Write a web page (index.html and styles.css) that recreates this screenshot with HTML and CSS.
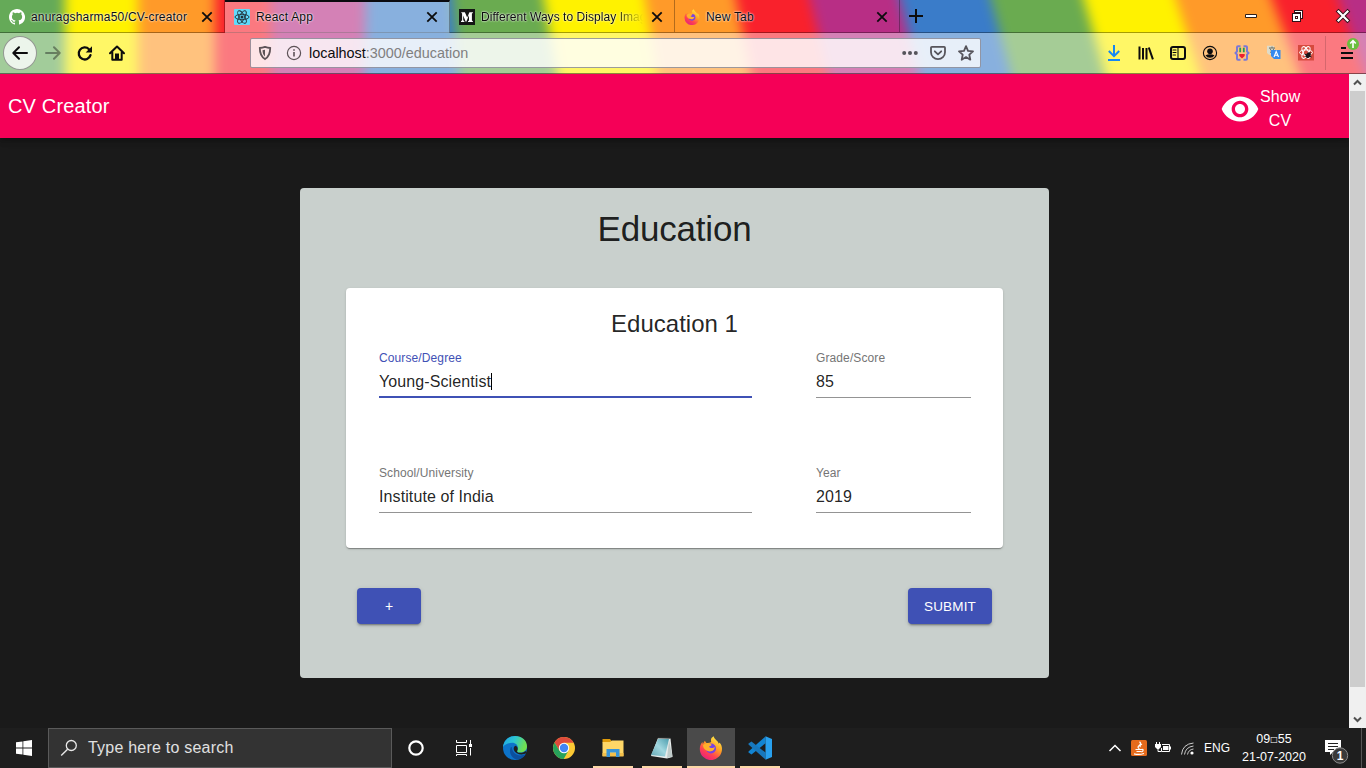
FILE: index.html
```html
<!DOCTYPE html>
<html lang="en">
<head>
<meta charset="utf-8">
<title>React App</title>
<link rel="stylesheet" href="styles.css">
</head>
<body>
<div class="screen">
  <header class="browser">
    <svg class="theme" width="1366" height="74" viewBox="0 0 1366 74" preserveAspectRatio="none">
      <defs><filter id="soft" filterUnits="userSpaceOnUse" x="-60" y="-80" width="1500" height="234" color-interpolation-filters="sRGB"><feGaussianBlur stdDeviation="6"/></filter></defs>
      <rect width="1366" height="74" fill="#6aab50"/>
      <g filter="url(#soft)">
        <path fill="#65aa58" d="M-60-74H70V148H-60z"/>
        <path fill="#fff200" d="M65-74H140V148H65z"/>
        <path fill="#ff9a29" d="M138-74H218V148H138z"/>
        <path fill="#f9212c" d="M215-74H272V148H215z"/>
        <path fill="#b82e85" d="M271-74H372V148H271z"/>
        <path fill="#3a7cc9" d="M367-74H446L466 148H363z"/>
        <path fill="#6aab50" d="M446-74H532L571 148H466z"/>
        <path fill="#fff200" d="M531-74H634L670 148H570z"/>
        <path fill="#ff9a29" d="M633-74H723L768 148H669z"/>
        <path fill="#f9212c" d="M721-74H794L848 148H766z"/>
        <path fill="#b82e85" d="M792-74H884L941 148H846z"/>
        <path fill="#3a7cc9" d="M881-74H976L1033 148H938z"/>
        <path fill="#6aab50" d="M971-74H1067L1127 148H1031z"/>
        <path fill="#fff200" d="M1063-74H1153L1228 148H1126z"/>
        <path fill="#ff9a29" d="M1152-74H1248L1329 148H1224z"/>
        <path fill="#f9212c" d="M1244-74H1316L1394 148H1328z"/>
        <path fill="#b82e85" d="M1313-74H1430V148H1391z"/>
      </g>
    </svg>
    <div class="tabs">
      <div class="tab">
        <svg class="fav" viewBox="0 0 16 16"><path fill="#fff" d="M8 0C3.58 0 0 3.58 0 8c0 3.54 2.29 6.53 5.47 7.59.4.07.55-.17.55-.38v-1.49c-2.01.37-2.53-.49-2.69-.94-.09-.23-.48-.94-.82-1.13-.28-.15-.68-.52-.01-.53.63-.01 1.08.58 1.23.82.72 1.21 1.87.87 2.33.66.07-.52.28-.87.51-1.07-1.78-.2-3.64-.89-3.64-3.95 0-.87.31-1.59.82-2.15-.08-.2-.36-1.02.08-2.12 0 0 .67-.21 2.2.82a7.4 7.4 0 0 1 4 0c1.53-1.04 2.2-.82 2.2-.82.44 1.1.16 1.92.08 2.12.51.56.82 1.27.82 2.15 0 3.07-1.87 3.75-3.65 3.95.29.25.54.73.54 1.48v2.2c0 .21.15.46.55.38A8 8 0 0 0 8 0z"/></svg>
        <span class="tab-title">anuragsharma50/CV-creator</span>
        <svg class="close" viewBox="0 0 16 16"><path d="M3.300 3.300l9.400 9.400M12.700 3.300l-9.400 9.400"/></svg>
      </div>
      <div class="tab active">
        <svg class="fav" viewBox="0 0 16 16"><rect width="16" height="16" rx="1" fill="#61dafb"/><g fill="none" stroke="#203038" stroke-width=".9"><ellipse cx="8" cy="8" rx="7" ry="2.700"/><ellipse cx="8" cy="8" rx="7" ry="2.700" transform="rotate(60 8 8)"/><ellipse cx="8" cy="8" rx="7" ry="2.700" transform="rotate(120 8 8)"/></g><circle cx="8" cy="8" r="1.500" fill="#203038"/></svg>
        <span class="tab-title">React App</span>
        <svg class="close" viewBox="0 0 16 16"><path d="M3.300 3.300l9.400 9.400M12.700 3.300l-9.400 9.400"/></svg>
      </div>
      <div class="tab">
        <svg class="fav" viewBox="0 0 16 16"><rect width="16" height="16" fill="#151515"/><path fill="#fff" d="M2.300 3.200h3.600L8.200 8.500l2.200-5.300h3.500v.7l-1 .7v6.900l1 .7v.7H9v-.7l1-.7V6.300l-2.700 6.500h-.6L4.200 6.500v4.700l1.200 1v.7H2v-.7l1.100-1V4.600l-.8-.8z"/></svg>
        <span class="tab-title fade">Different Ways to Display Imag</span>
        <svg class="close" viewBox="0 0 16 16"><path d="M3.300 3.300l9.400 9.400M12.700 3.300l-9.400 9.400"/></svg>
      </div>
      <div class="tab">
        <svg class="fav" viewBox="0 0 24 24"><use href="#firefox"/></svg>
        <span class="tab-title">New Tab</span>
        <svg class="close" viewBox="0 0 16 16"><path d="M3.300 3.300l9.400 9.400M12.700 3.300l-9.400 9.400"/></svg>
      </div>
      <svg class="new-tab" viewBox="0 0 16 16"><path d="M8 1v14M1 8h14" stroke="#0c0c0d" stroke-width="2"/></svg>
      <div class="window-buttons">
        <svg width="46" height="32"><path d="M17.500 14.500h11v3h-11z" fill="#fff" stroke="#302018"/></svg>
        <svg width="46" height="32"><path d="M18 13h2v-3h9v9h-2v3h-9z" fill="#301018"/><path d="M21 11h7v7h-1v-6h-6zM19 14h7v7h-7z" fill="#fff"/><path d="M21 16h3v3h-3z" fill="#401018"/><path d="M22 17h1v1h-1z" fill="#fff"/></svg>
        <svg width="46" height="32"><path d="M18.500 11.500l9 9M27.500 11.500l-9 9" stroke="#301018" stroke-width="4" stroke-linecap="square"/><path d="M18.500 11.500l9 9M27.500 11.500l-9 9" stroke="#fff" stroke-width="2.200" stroke-linecap="square"/></svg>
      </div>
    </div>
    <div class="toolbar">
      <div class="nav">
        <div class="tool back"><svg viewBox="0 0 16 16"><path d="M15 8H1.500M7 2.300L1.300 8 7 13.700" class="ln"/></svg></div>
        <div class="tool dim"><svg viewBox="0 0 16 16"><path d="M1 8h13.500M9 2.300L14.700 8 9 13.700" class="ln"/></svg></div>
        <div class="tool"><svg viewBox="0 0 16 16"><path d="M13.500 10.200A6 6 0 1 1 12 4.200" class="ln thick"/><path d="M15 1.200V7.500H8.700z"/></svg></div>
        <div class="tool"><svg viewBox="0 0 16 16"><path d="M1 8.300L8 1.500l7 6.800M3.300 7.500v7.200h9.400V7.500" class="ln"/><path d="M6 14V8.500h4V14z"/></svg></div>
      </div>
      <div class="urlbar">
        <svg class="shield" viewBox="0 0 16 16"><path d="M8 1.900c2 .7 3.500 1 5.200 1.100 0 5.400-1.200 8.700-5.200 11.100C4 11.700 2.800 8.400 2.800 3 4.500 2.900 6 2.600 8 1.900z" fill="none" stroke="#5d5257" stroke-width="1.800"/><path d="M8 4.700v6.800c-1.700-1.500-2.400-3.300-2.500-6.300z" fill="#5d5257"/></svg>
        <svg class="info" viewBox="0 0 16 16"><circle cx="8" cy="8" r="6.600" fill="none" stroke="#5d5257" stroke-width="1.200"/><path d="M8 7v4.500M8 4.200v1.600" stroke="#5d5257" stroke-width="1.600"/></svg>
        <span class="url"><b>localhost</b>:3000/education</span>
        <svg class="page-icon" viewBox="0 0 16 16" fill="#56545b"><circle cx="2.200" cy="8" r="2"/><circle cx="8" cy="8" r="2"/><circle cx="13.800" cy="8" r="2"/></svg>
        <svg class="page-icon" viewBox="0 0 16 16" fill="none" stroke="#56545b" stroke-width="1.800" stroke-linejoin="round" stroke-linecap="round"><path d="M1.900 1.900h12.200c.6 0 .9.300.9.900v4.400a7 7 0 0 1-14 0V2.800c0-.6.300-.9.900-.9zM4.800 6.300L8 9.400l3.200-3.100"/></svg>
        <svg class="page-icon" viewBox="0 0 16 16" fill="none" stroke="#56545b" stroke-width="1.800" stroke-linejoin="round"><path d="M8 1.200l2 4.600 5 .5-3.700 3.400 1 5L8 12.100l-4.300 2.600 1-5L1 6.300l5-.5z"/></svg>
      </div>
      <div class="extensions">
        <div class="tool"><svg viewBox="0 0 16 16"><path d="M8 0v11M2.800 6L8 11.200 13.200 6M2 15h12" fill="none" stroke="#1687f5" stroke-width="2"/></svg></div>
        <div class="tool"><svg viewBox="0 0 16 16"><path d="M1.500 1.500v13M5 3v11.500M8.500 3v11.500M10.800 2.500l4.100 11.800" class="ln sharp"/></svg></div>
        <div class="tool"><svg viewBox="0 0 16 16"><rect x="1" y="2" width="14" height="12" rx="2" class="ln"/><path d="M8 2v12M3 5h3M3 7.500h3M3 10h2.500" class="ln thin"/></svg></div>
        <div class="tool"><svg viewBox="0 0 16 16"><circle cx="8" cy="8" r="6.600" class="ln thin"/><circle cx="8" cy="6.200" r="2.800"/><path d="M3.500 10.300q4.500-2.300 9 0Q11.200 12.800 8 12.800T3.500 10.300z"/></svg></div>
        <div class="tool"><svg viewBox="0 0 16 16"><path d="M6.500 1.300H4q-1 0-1 1v4L1.500 8 3 9.700v4q0 1 1 1h2.500M9.500 1.300H12q1 0 1 1v4L14.500 8 13 9.700v4q0 1-1 1H9.500" fill="none" stroke="#7b78d6" stroke-width="2"/><path d="M6.200 2.800v4.400M9.800 2.800v4.400" stroke="#259e53" stroke-width="1.800"/><path d="M5.300 9h5.400v2L8 13.500 5.300 11z" fill="#ed1f2d"/></svg></div>
        <div class="tool"><svg viewBox="0 0 16 16"><path d="M1 .8h7l2 9H3L1 8z" fill="#dedbc9"/><path d="M3 3h6M6 1.500V3M4 3.500q1 3 4 4M8 3.500q-1 3-4 4" stroke="#6a7169" fill="none"/><path d="M5 5h9.500v9H8L5 11z" fill="#3389ee"/><path d="M8 12l2.200-5.500L12.500 12M8.800 10.300h2.900" fill="none" stroke="#fff" stroke-width="1.100"/></svg></div>
        <div class="tool"><svg viewBox="0 0 16 16"><rect width="16" height="15.500" fill="#d64a3e"/><g stroke="#fff" fill="none" stroke-width="1"><ellipse cx="8" cy="7.500" rx="6.500" ry="2.600"/><ellipse cx="8" cy="7.500" rx="6.500" ry="2.600" transform="rotate(60 8 7.500)"/><ellipse cx="8" cy="7.500" rx="6.500" ry="2.600" transform="rotate(120 8 7.500)"/></g><ellipse cx="10.300" cy="10" rx="2.200" ry="3" transform="rotate(35 10 10)" fill="#171417"/><path d="M6.500 9l7 3M7.500 12l5-5" stroke="#171417"/></svg></div>
        <i class="divider"></i>
        <div class="tool menu"><svg viewBox="0 0 16 16"><path d="M2 3h5M2 8h12M2 13h12" class="ln sharp"/></svg><svg class="update" viewBox="0 0 12 12"><circle cx="6" cy="6" r="6" fill="#6abf3c"/><path d="M6 10V3M3.200 5.500L6 2.700l2.800 2.800" fill="none" stroke="#fff" stroke-width="1.600"/></svg></div>
      </div>
    </div>
  </header>

  <div class="viewport">
    <main class="page">
      <div class="appbar">
        <span class="brand">CV Creator</span>
        <div class="show">
          <svg viewBox="0 0 24 24" width="40" height="40"><path fill="#fff" d="M12 4.500C7 4.500 2.730 7.610 1 12c1.730 4.390 6 7.500 11 7.500s9.270-3.110 11-7.500c-1.730-4.390-6-7.500-11-7.500zM12 17c-2.760 0-5-2.240-5-5s2.240-5 5-5 5 2.240 5 5-2.240 5-5 5zm0-8c-1.660 0-3 1.340-3 3s1.340 3 3 3 3-1.340 3-3-1.340-3-3-3z"/></svg>
          <span>Show<br>CV</span>
        </div>
      </div>
      <section class="panel">
        <h1>Education</h1>
        <div class="card">
          <h2>Education 1</h2>
          <div class="fields">
            <div class="field focused"><label>Course/Degree</label><div class="value">Young-Scientist<i class="caret"></i></div></div>
            <div class="field"><label>Grade/Score</label><div class="value">85</div></div>
            <div class="field"><label>School/University</label><div class="value">Institute of India</div></div>
            <div class="field"><label>Year</label><div class="value">2019</div></div>
          </div>
        </div>
        <div class="actions">
          <button class="btn">+</button>
          <button class="btn submit">SUBMIT</button>
        </div>
      </section>
    </main>
    <div class="scrollbar">
      <svg width="17" height="17"><path d="M5 10.500L8.500 7l3.500 3.500" fill="none" stroke="#505050" stroke-width="2"/></svg>
      <div class="thumb"></div>
      <svg width="17" height="17"><path d="M5 6.500L8.500 10 12 6.500" fill="none" stroke="#505050" stroke-width="2"/></svg>
    </div>
  </div>

  <footer class="taskbar">
    <div class="start"><svg width="16" height="16" viewBox="0 0 16 16"><path fill="#fff" d="M0 2.300L6.500 1.400V7.500H0zM7.300 1.200L16 0v7.500H7.300zM0 8.400h6.500v6.200L0 13.700zM7.300 8.400H16V16l-8.700-1.200z"/></svg></div>
    <div class="search"><svg width="18" height="18" viewBox="0 0 18 18"><circle cx="11.300" cy="6.500" r="5" fill="none" stroke="#e8e8e8" stroke-width="1.300"/><path d="M7.600 10.200L1.200 16.600" stroke="#e8e8e8" stroke-width="1.400"/></svg><span>Type here to search</span></div>
    <div class="sys"><svg viewBox="0 0 24 24"><circle cx="12" cy="12" r="6.700" fill="none" stroke="#fff" stroke-width="2.200"/></svg></div>
    <div class="sys"><svg viewBox="0 0 24 24"><g fill="none" stroke="#fff"><path d="M4.500 4v2.500h10V4M4.500 9.500h10v7h-10zM4.500 20v-1.500h10V20M18.500 4v4M18.500 12v7.500"/></g><path d="M17 8h3v3h-3z" fill="#fff"/></svg></div>
    <div class="apps">
      <div class="app"><svg viewBox="0 0 24 24"><defs><linearGradient id="edgeA" x1="0" y1="0" x2="1" y2=".3"><stop stop-color="#1fa4e8"/><stop offset=".5" stop-color="#2cc6d2"/><stop offset="1" stop-color="#70df50"/></linearGradient></defs><circle cx="12" cy="12" r="12" fill="#0d73c9"/><path fill="url(#edgeA)" d="M0 11C.8 4.400 5.500 0 12 0c7 0 12 4.800 12 10.300 0 3.900-3 6.300-6.400 6.300-3 0-4.300-1.100-3.600-2.200 2.200-3 .1-7.600-4.900-7.600C5.300 6.800 1.500 8.500 0 11z"/><path fill="#0c4f9d" d="M8.500 10c-3.500 5.500-.5 12 5 13.500 3.500.2 7.500-2 9.300-5.500-7 3.600-13.500.3-14.300-8z"/><path fill="#1e1e1e" d="M12.500 9.800c-2.600 1-2.600 5.200 1.300 7.400 3.400 1.900 7.200 1.400 9.700-.1l-.8-2.100c-2.600 2.200-7.500 2.500-8.500.7-.4-.8.400-1 .5-2.300.2-1.900-.8-3.200-2.200-3.600z"/></svg></div>
      <div class="app"><svg viewBox="0 0 24 24"><circle cx="12" cy="12" r="11" fill="#fcc934"/><path fill="#de4b3c" d="M2.500 6.500A11 11 0 0 1 21.600 6.800H12L7.500 14.700z"/><path fill="#27a25b" d="M2.500 6.500A11 11 0 0 0 11.700 23l4.700-8.200-4.400 2.400-4.500-2.500z"/><circle cx="12" cy="12" r="5.200" fill="#fff"/><circle cx="12" cy="12" r="4.200" fill="#4285f4"/></svg></div>
      <div class="app open"><svg viewBox="0 0 24 24"><path fill="#e09b0a" d="M1.500 3H9l2 2.500-2 1H1.500z"/><path fill="#ffd767" d="M1.500 6H9l2-1.500h11.500V20h-21z"/><path fill="#f4c04b" d="M1.500 17h21v3.500h-21z"/><path fill="#3995d8" d="M5.500 13h13v8H15v-4.500H9V21H5.500z"/></svg></div>
      <div class="app open"><svg viewBox="0 0 24 24"><defs><linearGradient id="noteA" x1="1" y1="0" x2="0" y2="1"><stop stop-color="#4e9eae"/><stop offset=".5" stop-color="#a1d7df"/><stop offset="1" stop-color="#66a8b5"/></linearGradient></defs><path fill="#e8eceb" d="M8 2l12.500.5 2 18.500-5.500 1.500L1 20z"/><path fill="url(#noteA)" d="M8 3h11l-4 17.500L1 19z"/><path fill="#bfcbc9" d="M19 4l3.500 16.500-5.500 1.500z"/><path stroke="#303b3c" stroke-width="1.500" stroke-dasharray="1 1" d="M8.500 2h12"/></svg></div>
      <div class="app open current"><svg viewBox="0 0 24 24"><defs><linearGradient id="ff" x1=".8" y1="0" x2=".2" y2="1"><stop stop-color="#fff44f"/><stop offset=".4" stop-color="#ff9f23"/><stop offset=".7" stop-color="#ff4052"/><stop offset="1" stop-color="#e21c83"/></linearGradient></defs><g id="firefox"><path fill="url(#ff)" d="M12.500 2c.8-1 1.500-1.500 2.200-1.800.3 3 4.300 4.200 5 7.500.7-.4.8-1.200.8-1.200C22.300 8.500 23 10.600 23 13a11.100 11.100 0 0 1-22.200 0c0-3 1.200-5.500 2.600-7L3.800 8l2-3.300 1.800 2.500c2-.4 3.300-.5 4.600-1.200-.4-1.500-.3-2.800.3-4z"/><circle cx="12" cy="12.500" r="5" fill="#7542e5"/><path fill="#ffb02b" d="M4 9c3-2.700 6-2.500 8-1 1.200.9 0 2-2 2.500 1 2.200 4.800 2 5.600.2.500 3.500-3.600 6-7.600 4C5.500 13.500 4 11.800 4 9z"/></g></svg></div>
      <div class="app open"><svg viewBox="0 0 24 24"><path fill="#1284d2" d="M17.500.5v6.800L3.500 18.400.5 16.500v-1L17.500.500z"/><path fill="#1878bd" d="M.5 7.500L3.500 5.600l14 11v7L.500 8.500z"/><path fill="#28a0ee" d="M17.500.2L24 3v18l-6.500 2.800z"/></svg></div>
    </div>
    <div class="tray">
      <svg width="16" height="16"><path d="M2.500 11L8 5.500l5.500 5.500" fill="none" stroke="#fff" stroke-width="1.500"/></svg>
      <svg width="16" height="16"><rect width="16" height="16" rx="1.500" fill="#e56b1c"/><path d="M8.500 1.800q2.200 1.700-.3 3.600t.2 3.400M11 4Q8 5.500 9.500 7M4.500 9.500h6q2.500-.5 1.300 1.500l-1.500 1M5.500 11.500h4.500M3 13.800q5 1.300 10-.3" fill="none" stroke="#fff" stroke-width="1.200"/></svg>
      <svg width="17" height="16"><path d="M1.500 2v2M4.500 2v2M3 8v3.500h3M7 4.500h7.500v7H6.500V8" fill="none" stroke="#fff"/><path d="M0 4h6v3L4 9H2L0 7zM8 6h5.500v4H8zM15 6.500h1v3h-1z" fill="#fff"/></svg>
      <svg width="16" height="16"><g fill="none" stroke="#ccc"><path d="M1.500 14.500Q2.500 4 13.500 3M4.500 14.500Q5.500 7 13.500 6M7.500 14.500Q8.500 9.500 13.500 9"/></g><circle cx="12" cy="13" r="1.600" fill="#fff"/></svg>
      <span class="lang">ENG</span>
      <div class="clock"><span>09<small>□</small>55</span><span>21-07-2020</span></div>
      <div class="notice"><svg width="28" height="28" viewBox="0 0 28 28"><path fill="#fff" d="M1 1h16v12H9l-3 3v-3H1z"/><path d="M4 4.500h10M4 7.500h10M4 10.500h6" stroke="#222"/><circle cx="16" cy="16.500" r="7.700" fill="#3a3a3a" stroke="#8b8b8b"/><text x="16" y="21" text-anchor="middle">1</text></svg></div>
      <i class="peek"></i>
    </div>
  </footer>
</div>
</body>
</html>
```
FILE: styles.css
```css
* { box-sizing: border-box; }
body { margin: 0; overflow: hidden; font-family: "Liberation Sans", Arial, sans-serif; }
.screen { width: 1366px; height: 768px; display: flex; flex-direction: column; background: #1a1a1a; }
svg { display: block; flex: none; }

/* Browser chrome */
.browser { position: relative; height: 74px; flex: none; overflow: hidden; }
.theme { position: absolute; left: 0; top: 0; }
.tabs { position: relative; height: 33px; display: flex; align-items: stretch; border-bottom: 1px solid rgba(0,0,0,.35); }
.tab { width: 225px; display: flex; align-items: center; padding: 1px 9px 0 9px; gap: 6px; border-right: 1px solid rgba(0,0,0,.3); }
.tab.active { background: rgba(255,255,255,.4); border-top: 2px solid #0a0a0f; padding-top: 0; margin-bottom: -1px; padding-bottom: 2px; }
.fav { width: 16px; height: 16px; }
.tab-title { flex: 1; min-width: 0; font-size: 12px; letter-spacing: .19px; white-space: nowrap; color: #0c0c0d; text-shadow: 0 0 2px #fff, 0 0 2px rgba(255,255,255,.7); line-height: 18px; }
.fade { -webkit-mask-image: linear-gradient(90deg, #000 82%, transparent); mask-image: linear-gradient(90deg, #000 82%, transparent); letter-spacing: .05px; }
.close { width: 16px; height: 16px; fill: none; stroke: #0c0c0d; stroke-width: 1.8; }
.new-tab { width: 16px; height: 16px; margin: 8px 0 0 8px; }
.window-buttons { margin-left: auto; display: flex; }
.toolbar { position: relative; height: 41px; display: flex; align-items: center; background: rgba(255,255,255,.4); border-bottom: 1px solid rgba(0,0,0,.45); }
.nav { width: 250px; padding-left: 3px; display: flex; align-items: center; }
.tool { width: 32px; height: 32px; display: flex; align-items: center; justify-content: center; flex: none; }
.tool svg { width: 16px; height: 16px; fill: #0c0c0d; overflow: visible; }
.tool svg .ln { fill: none; stroke: #0c0c0d; stroke-width: 2; stroke-linecap: round; stroke-linejoin: round; }
.tool svg .thick { stroke-width: 2.3; }
.tool svg .thin { stroke-width: 1.1; }
.tool svg .sharp { stroke-linecap: butt; }
.back { width: 34px; height: 34px; border: 1px solid rgba(60,60,60,.5); border-radius: 50%; background: rgba(255,255,255,.8); }
.dim { opacity: .4; }
.urlbar { width: 731px; height: 30px; display: flex; align-items: center; padding-left: 6px; padding-right: 6px; background: rgba(255,255,255,.8); border: 1px solid rgba(60,60,80,.5); border-radius: 2px; }
.shield, .info, .page-icon { width: 16px; height: 16px; }
.info { margin: 0 7px 0 13px; }
.url { flex: 1; font-size: 14.4px; color: #808080; }
.url b { font-weight: 400; color: #0c0c0d; }
.page-icon + .page-icon { margin-left: 12px; }
.extensions { margin-left: auto; display: flex; align-items: center; padding-right: 3px; }
.divider { width: 1px; height: 34px; margin: 0 5px 0 3px; background: rgba(0,0,0,.15); }
.menu { position: relative; }
.tool .update { position: absolute; width: 12px; height: 12px; right: 4px; top: 1px; }

/* Page */
.viewport { height: 654px; display: flex; flex: none; }
.page { width: 1349px; height: 654px; background: #1a1a1a; }
.appbar { height: 64px; padding: 0 49px 0 8px; display: flex; align-items: center; justify-content: space-between; background: #f50057; color: #fff; box-shadow: 0 2px 4px -1px rgba(0,0,0,.2), 0 4px 5px rgba(0,0,0,.14), 0 1px 10px rgba(0,0,0,.12); }
.brand { font-size: 20px; letter-spacing: .15px; }
.show { display: flex; align-items: center; font-size: 16px; line-height: 24px; letter-spacing: .1px; text-align: center; padding-top: 6px; }
.show span { width: 40px; margin-top: -1px; }
.panel { width: 749px; height: 490px; margin: 50px auto 0; padding: 20px 46px 0; background: #c9d0cd; border-radius: 4px; color: rgba(0,0,0,.87); }
h1 { margin: 0 0 38px; font-size: 35px; line-height: 42px; font-weight: 400; letter-spacing: -.2px; text-align: center; }
.card { height: 260px; padding: 20px 32px 0 33px; background: #fff; border-radius: 4px; box-shadow: 0 2px 1px -1px rgba(0,0,0,.2), 0 1px 1px rgba(0,0,0,.14), 0 1px 3px rgba(0,0,0,.12); }
h2 { margin: 0 1px 0 0; font-size: 24px; line-height: 32px; font-weight: 400; text-align: center; }
.fields { padding-top: 11px; display: grid; grid-template-columns: 373px 155px; column-gap: 64px; row-gap: 68px; }
.field { height: 47px; display: flex; flex-direction: column; border-bottom: 1px solid #949494; }
.field label { font-size: 12px; line-height: 14px; letter-spacing: .11px; color: #757575; }
.value { display: flex; align-items: center; height: 19px; margin-top: 7px; font-size: 16px; letter-spacing: .1px; color: rgba(0,0,0,.87); }
.focused { border-bottom: 2px solid #3f51b5; }
.focused label { color: #3f51b5; }
.caret { width: 1px; height: 17px; background: #000; }
.actions { display: flex; justify-content: space-between; padding: 40px 11px 0; }
.btn { width: 64px; height: 36px; padding: 0; border: 0; border-radius: 4px; background: #3f51b5; color: #fff; font: 14px "Liberation Sans", Arial, sans-serif; box-shadow: 0 3px 1px -2px rgba(0,0,0,.2), 0 2px 2px rgba(0,0,0,.14), 0 1px 5px rgba(0,0,0,.12); }
.submit { width: 84px; font-size: 13.5px; letter-spacing: .15px; }
.scrollbar { width: 17px; height: 654px; display: flex; flex-direction: column; background: #f0f0f0; }
.thumb { height: 596px; width: 15px; margin: 0 1px auto; background: #cdcdcd; }

/* Taskbar */
.taskbar { height: 40px; display: flex; align-items: stretch; background: #1e1e1e; color: #fff; }
.start { width: 48px; display: flex; align-items: center; justify-content: center; }
.search { width: 344px; display: flex; align-items: center; padding-left: 11px; gap: 10px; border: 1px solid #5a5a5a; background: #333; font-size: 16px; letter-spacing: .22px; color: #e0e0e0; }
.sys { width: 48px; display: flex; align-items: center; justify-content: center; }
.sys svg { width: 24px; height: 24px; }
.apps { display: flex; padding-left: 2px; }
.app { width: 49px; display: flex; align-items: center; justify-content: center; }
.app svg { width: 24px; height: 24px; }
.open { background: linear-gradient(#fbd7a6, #fbd7a6) center bottom / 40px 2px no-repeat; }
.current { background: linear-gradient(#fbd7a6, #fbd7a6) center bottom / 48px 2px no-repeat, #4a4a4a; width: 48px; margin: 0 .5px; }
.tray { margin-left: auto; display: flex; align-items: center; padding-right: 4px; gap: 8px; font-size: 12px; }
.lang { width: 27px; }
.clock { width: 72px; margin-left: -1px; display: flex; flex-direction: column; align-items: center; line-height: 18px; white-space: nowrap; font-size: 12.5px; }
.clock small { font: 8px "DejaVu Sans", sans-serif; vertical-align: 1px; }
.notice { width: 24px; margin: 9px 0 0 6px; }
.notice text { font: bold 12px "Liberation Sans", Arial, sans-serif; fill: #fff; }
.peek { width: 1px; height: 40px; margin-left: 5px; background: #555; }
```
